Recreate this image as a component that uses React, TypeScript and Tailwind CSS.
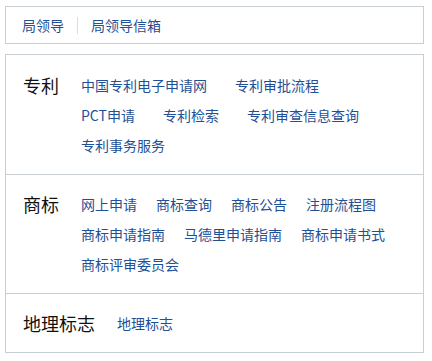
import React from 'react';

const sections = [
  {
    title: '专利',
    gap: 'gap-x-[28px]',
    links: ['中国专利电子申请网', '专利审批流程', 'PCT申请', '专利检索', '专利审查信息查询', '专利事务服务'],
    breaks: [2, 5],
  },
  {
    title: '商标',
    gap: 'gap-x-[19px]',
    links: ['网上申请', '商标查询', '商标公告', '注册流程图', '商标申请指南', '马德里申请指南', '商标申请书式', '商标评审委员会'],
    breaks: [4, 7],
  },
  {
    title: '地理标志',
    gap: 'gap-x-[28px]',
    links: ['地理标志'],
    breaks: [],
  },
];

const App = () => {
  return (
    <div
      className="w-[432px] h-[361px] bg-white pt-[6px] pl-[5px]"
      style={{ fontFamily: '"Noto Sans CJK SC", "Noto Sans", sans-serif' }}
    >
      <div className="w-[419px] h-[38px] border border-[#c8cfd4] flex items-center pl-4 text-[14px] text-[#1f4f95]">
        <a>局领导</a>
        <span className="mx-[13px] w-px h-[17px] bg-[#e2dadd]" />
        <a>局领导信箱</a>
      </div>

      <div className="mt-[10px] w-[419px] border border-[#c8cfd4]">
        {sections.map((s, i) => {
          const rows: string[][] = [];
          let start = 0;
          [...s.breaks, s.links.length].forEach((end) => {
            if (end > start) rows.push(s.links.slice(start, end));
            start = end;
          });
          return (
            <div
              key={s.title}
              className={`flex gap-[22px] pl-[17px] pb-[14px] ${i > 0 ? 'pt-[14px] border-t border-[#c8cfd4]' : 'pt-[15px]'}`}
            >
              <h3 className="text-[18px] leading-[30px] text-[#111]">{s.title}</h3>
              <div className="flex flex-col">
                {rows.map((row, j) => (
                  <div key={j} className={`flex ${s.gap} text-[14px] leading-[30px] text-[#1f4f95]`}>
                    {row.map((l) => (
                      <a key={l}>{l}</a>
                    ))}
                  </div>
                ))}
              </div>
            </div>
          );
        })}
      </div>
    </div>
  );
};

export default App;
